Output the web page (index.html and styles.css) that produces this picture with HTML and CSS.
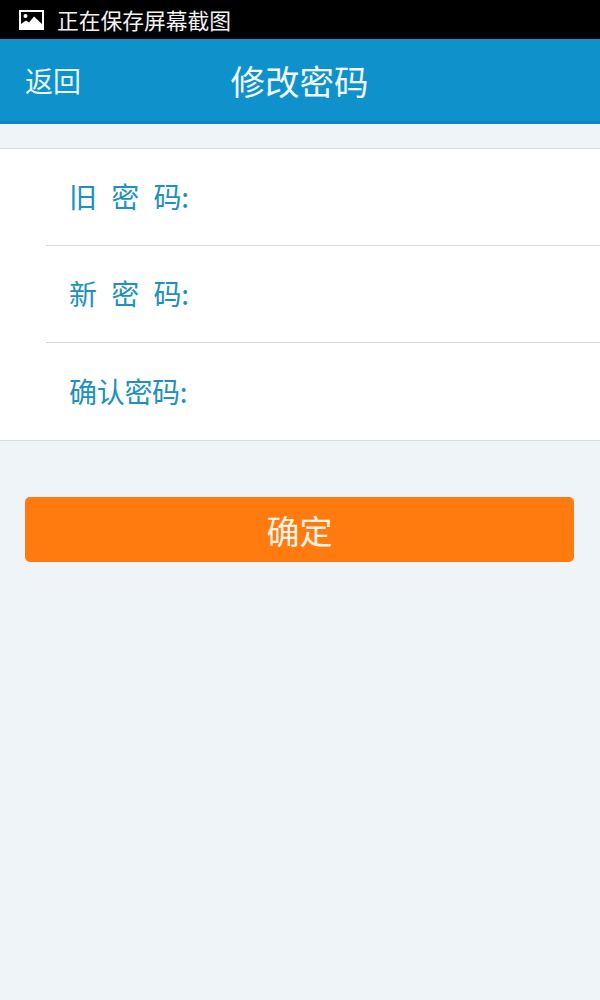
FILE: index.html
```html
<!DOCTYPE html>
<html lang="zh-CN">
<head>
    <meta charset="UTF-8">
    <meta name="viewport" content="width=device-width, initial-scale=1.0">
    <title>修改密码</title>
    <link rel="stylesheet" href="styles.css">
</head>
<body>
    <div class="status-bar">
        <svg class="status-icon" width="26" height="20" viewBox="0 0 26 20">
            <path fill="#fff" fill-rule="evenodd" d="M0 0h25v20H0z M2 2v12l5-3.5 3 2 5-6 8 7.500V2z"/>
            <circle cx="6.500" cy="6" r="2" fill="#fff"/>
        </svg>
        <span>正在保存屏幕截图</span>
    </div>

    <div class="header">
        <a class="back" href="#">返回</a>
        <h1>修改密码</h1>
    </div>

    <form action="#" method="POST">
        <div class="form-list">
            <div class="form-row">
                <label for="old">旧 密 码:</label>
                <input type="password" id="old" name="old">
            </div>
            <div class="form-row">
                <label for="new">新 密 码:</label>
                <input type="password" id="new" name="new">
            </div>
            <div class="form-row">
                <label for="confirm">确认密码:</label>
                <input type="password" id="confirm" name="confirm">
            </div>
        </div>

        <button type="submit">确定</button>
    </form>
</body>
</html>
```

FILE: styles.css
```css
* {
    box-sizing: border-box;
}

body {
    font-family: "Noto Sans CJK SC", "Liberation Sans", sans-serif;
    background-color: #eff4f8;
    margin: 0;
}

.status-bar {
    display: flex;
    align-items: center;
    height: 39px;
    padding-left: 19px;
    background-color: #000;
    color: #f2f2f2;
    font-size: 21.75px;
    line-height: 37px;
}

.status-icon {
    margin-right: 12px;
}

.header {
    position: relative;
    height: 85px;
    background-color: #0f91cb;
    border-bottom: 3px solid #0b87bf;
    color: #fff;
    text-align: center;
}

.back {
    position: absolute;
    left: 25px;
    top: 0;
    line-height: 82px;
    font-size: 28px;
    color: #e8f8fc;
    text-decoration: none;
}

h1 {
    margin: 0 0 0 -1px;
    line-height: 82px;
    font-size: 34.500px;
    font-weight: normal;
    color: #f2fafd;
}

.form-list {
    margin-top: 24px;
    background-color: #fff;
    border-top: 1px solid #d6dde2;
    border-bottom: 1px solid #d6dde2;
}

.form-row {
    display: flex;
    align-items: center;
    height: 97px;
    margin-left: 46px;
    padding: 0 0 2px 23px;
    border-bottom: 1px solid #d8dde0;
}

.form-row:nth-child(2) {
    border-bottom-color: #d9d6d0;
}

.form-row:last-child {
    border-bottom: none;
}

label {
    width: 119px;
    flex-shrink: 0;
    font-size: 28px;
    letter-spacing: -0.3px;
    word-spacing: 8.600px;
    color: #2090bd;
    white-space: nowrap;
}

input {
    flex: 1;
    min-width: 0;
    height: 60px;
    border: none;
    outline: none;
    background: none;
    font-size: 24px;
}

button {
    display: block;
    width: 549px;
    height: 65px;
    margin: 56px 0 0 25px;
    background-color: #ff7b10;
    color: #fdf3e6;
    border: none;
    border-radius: 5px;
    font-family: inherit;
    font-size: 33px;
    cursor: pointer;
}
```
